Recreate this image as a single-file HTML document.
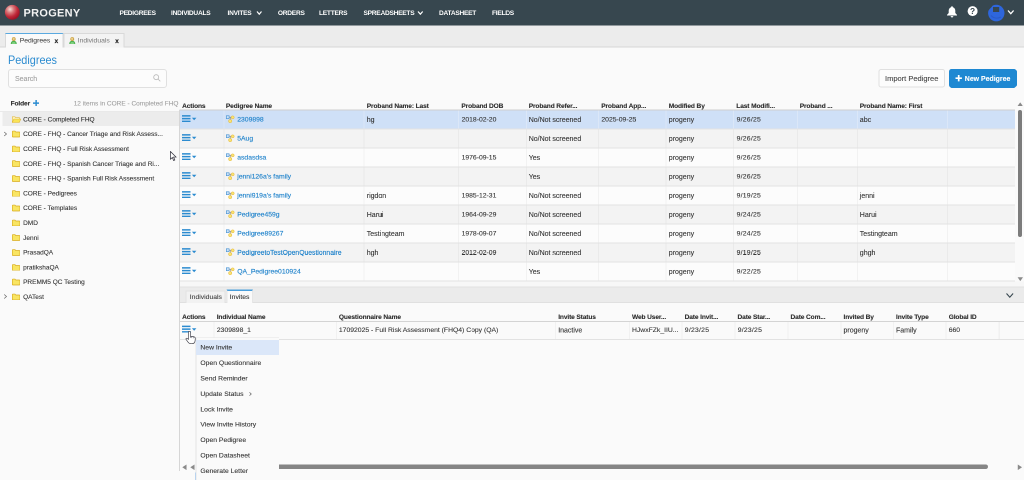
<!DOCTYPE html>
<html><head><meta charset="utf-8"><title>Progeny</title>
<style>
*{box-sizing:border-box;margin:0;padding:0}
html,body{width:1024px;height:480px;overflow:hidden;background:#fafafa;font-family:"Liberation Sans",sans-serif;color:#333}
#app{position:absolute;left:0;top:0;width:2048px;height:960px;transform:scale(0.5);transform-origin:0 0;will-change:transform}
#in{position:absolute;left:0;top:0;width:1024px;height:480px;zoom:2}
.abs{position:absolute}
#hdr{position:absolute;left:0;top:0;width:1024px;height:25.5px;background:#37474f}
#hdr .nav{position:absolute;top:0.25px;height:25px;line-height:25px;color:#fff;font-weight:bold;font-size:6.6px;letter-spacing:-0.25px;white-space:nowrap}
#logo{position:absolute;left:23.3px;top:0.6px;line-height:25px;color:#f4f4f4;font-weight:bold;font-size:10.6px;letter-spacing:0.3px;transform:scaleX(1.035);transform-origin:0 50%}
#tabbar{position:absolute;left:0;top:25.5px;width:1024px;height:22px;background:#ececec;border-bottom:1px solid #d6d6d6}
.ttab{position:absolute;top:7.25px;height:14.75px;background:#f3f3f3;border:1px solid #d9d9d9;border-bottom:none;font-size:6.8px;line-height:13.4px;white-space:nowrap}
.t{position:absolute;white-space:nowrap;font-size:6.8px;line-height:10px;color:#333;-webkit-text-stroke:0.1px}
.a{font-size:7px}
.d{letter-spacing:0.25px}
.b{font-weight:bold;font-size:6.6px;letter-spacing:-0.12px;color:#2c2c2c}
.lnk{color:#2787cd;-webkit-text-stroke:0.16px}
.tr{font-size:6.5px}
#title{position:absolute;left:8px;top:52.1px;font-size:11.7px;line-height:16px;color:#2b8bd0;transform:scaleX(0.93);transform-origin:0 50%}
#search{position:absolute;left:8.1px;top:69px;width:158.9px;height:18.8px;border:1px solid #e0e0e0;border-radius:3px;background:#fcfcfc}
.btn{position:absolute;top:69.2px;height:18.2px;border-radius:2.5px;white-space:nowrap}
.row{position:absolute;left:179.9px;width:835.1px;height:19px;border-bottom:1px solid #e3e3e3}
.cd{position:absolute;top:0;width:1px;height:100%;background:#f2f2f2}
.mi{position:absolute;left:196px;width:83px;height:14.75px}
</style></head><body><div id="app"><div id="in">
<div id="hdr">
<svg class="abs" style="left:4.6px;top:4.6px" width="15.6" height="15.6" viewBox="0 0 16 16"><defs><radialGradient id="g" cx="35%" cy="30%" r="70%"><stop offset="0" stop-color="#f6dcd6"/><stop offset="0.35" stop-color="#d9777a"/><stop offset="0.7" stop-color="#c02a3a"/><stop offset="1" stop-color="#a01226"/></radialGradient></defs><circle cx="8" cy="8" r="7.6" fill="url(#g)"/></svg>
<div id="logo">PROGENY</div>
<div class="nav" style="left:119.5px">PEDIGREES</div>
<div class="nav" style="left:171px">INDIVIDUALS</div>
<div class="nav" style="left:227.5px">INVITES</div>
<div class="nav" style="left:277.9px">ORDERS</div>
<div class="nav" style="left:319px">LETTERS</div>
<div class="nav" style="left:363.5px">SPREADSHEETS</div>
<div class="nav" style="left:439px">DATASHEET</div>
<div class="nav" style="left:492px">FIELDS</div>
<svg class="abs" style="left:256.1px;top:10.3px" width="6.5" height="4.7" viewBox="-1 -1 6.5 4.7"><path d="M0 0 L2.25 2.7 L4.5 0" fill="none" stroke="#fff" stroke-width="1.2"/></svg>
<svg class="abs" style="left:417.1px;top:10.3px" width="6.7" height="4.7" viewBox="-1 -1 6.7 4.7"><path d="M0 0 L2.35 2.7 L4.7 0" fill="none" stroke="#fff" stroke-width="1.2"/></svg>
<svg class="abs" style="left:946.7px;top:5.8px" width="11" height="11.5" viewBox="0 0 11 11.5"><path d="M5.5 0.3c-0.6 0-0.9 0.4-0.9 0.9C3 1.7 2.2 3.1 2.2 4.8v2.2L0.5 8.9v0.6h10V8.9L8.8 7V4.8c0-1.7-0.8-3.1-2.4-3.6c0-0.5-0.3-0.9-0.9-0.9z M4.2 10.1a1.3 1.3 0 0 0 2.6 0z" fill="#fff"/></svg>
<svg class="abs" style="left:967.5px;top:6.1px" width="10.2" height="10.2" viewBox="0 0 10 10"><circle cx="5" cy="5" r="4.9" fill="#fff"/><text x="5" y="7.9" font-size="8.2" font-weight="bold" text-anchor="middle" fill="#37474f" font-family="Liberation Sans, sans-serif">?</text></svg>
<svg class="abs" style="left:987.8px;top:4.5px" width="16.6" height="16.9" viewBox="0 0 16.6 16.9"><ellipse cx="8.3" cy="8.6" rx="8.2" ry="8.3" fill="#2e66dc"/><path d="M0 0H5L3.8 2.3L1.5 4.8L0 6.5z" fill="#37474f"/><path d="M5 2.5h6.2v5h-6.2z" fill="#37474f"/><path d="M3 11c2 2.5 6 3.5 10 1.5" fill="none" stroke="#2a5bc8" stroke-width="1"/></svg>
<svg class="abs" style="left:1007.1px;top:9.4px" width="7.6" height="5.2" viewBox="-1 -1 7.6 5.2"><path d="M0 0 L2.8 3.2 L5.6 0" fill="none" stroke="#fff" stroke-width="1.3"/></svg>
</div>
<div id="tabbar">
<div class="ttab" style="left:5.2px;width:58.2px;background:#fafafa;border-top:1px solid #5aa9e0"><svg class="abs" style="left:4.4px;top:3px" width="6.5" height="7.25" viewBox="0 0 7 8"><path d="M0.2 8c0-2.7 1.2-3.7 3.3-3.7s3.3 1 3.3 3.7z" fill="#4cb050"/><path d="M1.3 8c0-1.8 0.8-2.6 2.2-2.6s2.2 0.8 2.2 2.6z" fill="#7fd07f"/><circle cx="3.5" cy="2.3" r="2.1" fill="#c9a040"/><circle cx="3.4" cy="2.1" r="1.3" fill="#ecd08a"/></svg><span class="abs" style="left:13.5px;color:#333">Pedigrees</span><span class="abs" style="left:48.4px;top:0.5px;font-weight:bold;font-size:6.3px;color:#2a2a2a;-webkit-text-stroke:0.25px">x</span></div>
<div class="ttab" style="left:63.4px;width:61.2px;color:#777"><svg class="abs" style="left:4.4px;top:3px" width="6.5" height="7.25" viewBox="0 0 7 8"><path d="M0.2 8c0-2.7 1.2-3.7 3.3-3.7s3.3 1 3.3 3.7z" fill="#4cb050"/><path d="M1.3 8c0-1.8 0.8-2.6 2.2-2.6s2.2 0.8 2.2 2.6z" fill="#7fd07f"/><circle cx="3.5" cy="2.3" r="2.1" fill="#c9a040"/><circle cx="3.4" cy="2.1" r="1.3" fill="#ecd08a"/></svg><span class="abs" style="left:13.3px">Individuals</span><span class="abs" style="left:50.8px;top:0.5px;font-weight:bold;font-size:6.3px;color:#2a2a2a;-webkit-text-stroke:0.25px">x</span></div>
</div>
<div id="title">Pedigrees</div>
<div id="search"><span class="t" style="left:5.9px;top:3.6px;color:#a0a0a0;font-size:7px">Search</span><svg class="abs" style="left:144px;top:4px" width="8" height="8" viewBox="0 0 8 8"><circle cx="3.2" cy="3.2" r="2.5" fill="none" stroke="#bababa" stroke-width="0.8"/><path d="M5 5L7.3 7.3" stroke="#bababa" stroke-width="0.8"/></svg></div>
<div class="btn" style="left:878.5px;width:66.3px;background:#fcfcfc;border:1px solid #e0e0e0"><span class="t" style="left:5.5px;top:3.4px;font-size:7.5px;color:#444">Import Pedigree</span></div>
<div class="btn" style="left:948.8px;width:67.8px;background:#1e88d2"><svg class="abs" style="left:6.7px;top:5.9px" width="6.4" height="6.4" viewBox="0 0 6.4 6.4"><path d="M3.2 0V6.4M0 3.2H6.4" stroke="#fff" stroke-width="1.7"/></svg><span class="t" style="left:16px;top:4.4px;font-size:6.95px;font-weight:bold;color:#fff">New Pedigree</span></div>
<div class="t b" style="left:10.6px;top:98.6px">Folder</div>
<svg class="abs" style="left:32.75px;top:99.75px" width="6.25" height="6.25" viewBox="0 0 6 6"><path d="M3 0V6M0 3H6" stroke="#2b8bd0" stroke-width="1.4"/></svg>
<div class="t tr" style="left:73.7px;top:98.7px;color:#a0a0a0">12 items in CORE - Completed FHQ</div>
<div class="abs" style="left:0;top:111px;width:179.5px;height:1px;background:#e9e9e9"></div>
<div class="abs" style="left:2.3px;top:112px;width:177.2px;height:14px;background:#ececec"></div>
<svg class="abs" style="left:12px;top:115.85px" width="9" height="7" viewBox="0 0 9 7"><path d="M0.3 6.5V0.8h2.7l0.8 0.9h3.7v1.3" fill="#fff6c8" stroke="#e2b93b" stroke-width="0.6"/><path d="M0.3 6.5L1.8 3h7L7.3 6.5z" fill="#f9e356" stroke="#e2b93b" stroke-width="0.6"/></svg>
<div class="t tr" style="left:23.1px;top:114.45px">CORE - Completed FHQ</div>
<svg class="abs" style="left:12px;top:130.64px" width="8.2" height="6.8" viewBox="0 0 8.2 6.8"><path d="M0.3 6V1.2q0-0.6 0.6-0.6h2.1l0.8 0.9h3.5q0.6 0 0.6 0.6V6q0 0.5-0.6 0.5H0.9q-0.6 0-0.6-0.5z" fill="#f9e562" stroke="#d8ac22" stroke-width="0.65"/></svg>
<div class="t tr" style="left:23.1px;top:129.24px">CORE - FHQ - Cancer Triage and Risk Assess...</div>
<svg class="abs" style="left:3.6px;top:131.44px" width="4" height="5" viewBox="0 0 4 5"><path d="M0.7 0.5L3 2.5L0.7 4.5" fill="none" stroke="#666" stroke-width="0.7"/></svg>
<svg class="abs" style="left:12px;top:145.43px" width="8.2" height="6.8" viewBox="0 0 8.2 6.8"><path d="M0.3 6V1.2q0-0.6 0.6-0.6h2.1l0.8 0.9h3.5q0.6 0 0.6 0.6V6q0 0.5-0.6 0.5H0.9q-0.6 0-0.6-0.5z" fill="#f9e562" stroke="#d8ac22" stroke-width="0.65"/></svg>
<div class="t tr" style="left:23.1px;top:144.03px">CORE - FHQ - Full Risk Assessment</div>
<svg class="abs" style="left:12px;top:160.22px" width="8.2" height="6.8" viewBox="0 0 8.2 6.8"><path d="M0.3 6V1.2q0-0.6 0.6-0.6h2.1l0.8 0.9h3.5q0.6 0 0.6 0.6V6q0 0.5-0.6 0.5H0.9q-0.6 0-0.6-0.5z" fill="#f9e562" stroke="#d8ac22" stroke-width="0.65"/></svg>
<div class="t tr" style="left:23.1px;top:158.82px">CORE - FHQ - Spanish Cancer Triage and Ri...</div>
<svg class="abs" style="left:12px;top:175.01px" width="8.2" height="6.8" viewBox="0 0 8.2 6.8"><path d="M0.3 6V1.2q0-0.6 0.6-0.6h2.1l0.8 0.9h3.5q0.6 0 0.6 0.6V6q0 0.5-0.6 0.5H0.9q-0.6 0-0.6-0.5z" fill="#f9e562" stroke="#d8ac22" stroke-width="0.65"/></svg>
<div class="t tr" style="left:23.1px;top:173.61px">CORE - FHQ - Spanish Full Risk Assessment</div>
<svg class="abs" style="left:12px;top:189.8px" width="8.2" height="6.8" viewBox="0 0 8.2 6.8"><path d="M0.3 6V1.2q0-0.6 0.6-0.6h2.1l0.8 0.9h3.5q0.6 0 0.6 0.6V6q0 0.5-0.6 0.5H0.9q-0.6 0-0.6-0.5z" fill="#f9e562" stroke="#d8ac22" stroke-width="0.65"/></svg>
<div class="t tr" style="left:23.1px;top:188.4px">CORE - Pedigrees</div>
<svg class="abs" style="left:12px;top:204.59px" width="8.2" height="6.8" viewBox="0 0 8.2 6.8"><path d="M0.3 6V1.2q0-0.6 0.6-0.6h2.1l0.8 0.9h3.5q0.6 0 0.6 0.6V6q0 0.5-0.6 0.5H0.9q-0.6 0-0.6-0.5z" fill="#f9e562" stroke="#d8ac22" stroke-width="0.65"/></svg>
<div class="t tr" style="left:23.1px;top:203.19px">CORE - Templates</div>
<svg class="abs" style="left:12px;top:219.38px" width="8.2" height="6.8" viewBox="0 0 8.2 6.8"><path d="M0.3 6V1.2q0-0.6 0.6-0.6h2.1l0.8 0.9h3.5q0.6 0 0.6 0.6V6q0 0.5-0.6 0.5H0.9q-0.6 0-0.6-0.5z" fill="#f9e562" stroke="#d8ac22" stroke-width="0.65"/></svg>
<div class="t tr" style="left:23.1px;top:217.98px">DMD</div>
<svg class="abs" style="left:12px;top:234.17px" width="8.2" height="6.8" viewBox="0 0 8.2 6.8"><path d="M0.3 6V1.2q0-0.6 0.6-0.6h2.1l0.8 0.9h3.5q0.6 0 0.6 0.6V6q0 0.5-0.6 0.5H0.9q-0.6 0-0.6-0.5z" fill="#f9e562" stroke="#d8ac22" stroke-width="0.65"/></svg>
<div class="t tr" style="left:23.1px;top:232.77px">Jenni</div>
<svg class="abs" style="left:12px;top:248.96px" width="8.2" height="6.8" viewBox="0 0 8.2 6.8"><path d="M0.3 6V1.2q0-0.6 0.6-0.6h2.1l0.8 0.9h3.5q0.6 0 0.6 0.6V6q0 0.5-0.6 0.5H0.9q-0.6 0-0.6-0.5z" fill="#f9e562" stroke="#d8ac22" stroke-width="0.65"/></svg>
<div class="t tr" style="left:23.1px;top:247.56px">PrasadQA</div>
<svg class="abs" style="left:12px;top:263.75px" width="8.2" height="6.8" viewBox="0 0 8.2 6.8"><path d="M0.3 6V1.2q0-0.6 0.6-0.6h2.1l0.8 0.9h3.5q0.6 0 0.6 0.6V6q0 0.5-0.6 0.5H0.9q-0.6 0-0.6-0.5z" fill="#f9e562" stroke="#d8ac22" stroke-width="0.65"/></svg>
<div class="t tr" style="left:23.1px;top:262.35px">pratikshaQA</div>
<svg class="abs" style="left:12px;top:278.54px" width="8.2" height="6.8" viewBox="0 0 8.2 6.8"><path d="M0.3 6V1.2q0-0.6 0.6-0.6h2.1l0.8 0.9h3.5q0.6 0 0.6 0.6V6q0 0.5-0.6 0.5H0.9q-0.6 0-0.6-0.5z" fill="#f9e562" stroke="#d8ac22" stroke-width="0.65"/></svg>
<div class="t tr" style="left:23.1px;top:277.14px">PREMM5 QC Testing</div>
<svg class="abs" style="left:12px;top:293.33px" width="8.2" height="6.8" viewBox="0 0 8.2 6.8"><path d="M0.3 6V1.2q0-0.6 0.6-0.6h2.1l0.8 0.9h3.5q0.6 0 0.6 0.6V6q0 0.5-0.6 0.5H0.9q-0.6 0-0.6-0.5z" fill="#f9e562" stroke="#d8ac22" stroke-width="0.65"/></svg>
<div class="t tr" style="left:23.1px;top:291.93px">QATest</div>
<svg class="abs" style="left:3.6px;top:294.13px" width="4" height="5" viewBox="0 0 4 5"><path d="M0.7 0.5L3 2.5L0.7 4.5" fill="none" stroke="#666" stroke-width="0.7"/></svg>
<div class="abs" style="left:179.5px;top:95px;width:844.5px;height:191px;background:#fafafa"></div>
<div class="t b" style="left:182.1px;top:100.9px">Actions</div>
<div class="t b" style="left:225.9px;top:100.9px">Pedigree Name</div>
<div class="t b" style="left:366.75px;top:100.9px">Proband Name: Last</div>
<div class="t b" style="left:461.4px;top:100.9px">Proband DOB</div>
<div class="t b" style="left:528.7px;top:100.9px">Proband Refer...</div>
<div class="t b" style="left:601.2px;top:100.9px">Proband App...</div>
<div class="t b" style="left:668.7px;top:100.9px">Modified By</div>
<div class="t b" style="left:736.3px;top:100.9px">Last Modifi...</div>
<div class="t b" style="left:799.7px;top:100.9px">Proband ...</div>
<div class="t b" style="left:859.7px;top:100.9px">Proband Name: First</div>
<div class="abs" style="left:179.5px;top:109.6px;width:835.5px;height:1px;background:#cfcfcf"></div>
<div class="row" style="top:110.5px;background:#cfe0f7">
<div class="cd" style="left:43.5px;background:#dbe7f8"></div>
<div class="cd" style="left:183.6px;background:#dbe7f8"></div>
<div class="cd" style="left:277.9px;background:#dbe7f8"></div>
<div class="cd" style="left:346px;background:#dbe7f8"></div>
<div class="cd" style="left:417.9px;background:#dbe7f8"></div>
<div class="cd" style="left:485.6px;background:#dbe7f8"></div>
<div class="cd" style="left:553.1px;background:#dbe7f8"></div>
<div class="cd" style="left:616.9px;background:#dbe7f8"></div>
<div class="cd" style="left:677.1px;background:#dbe7f8"></div>
<div class="cd" style="left:767.1px;background:#dbe7f8"></div>
<svg class="abs" style="left:2.2px;top:4.55px" width="15" height="7.2" viewBox="0 0 15 7.2"><path d="M0 0.85h8.5M0 3.6h8.5M0 6.35h8.5" stroke="#2b8bd0" stroke-width="1.55"/><path d="M9.9 2.75h4.5l-2.25 2.5z" fill="#2b8bd0"/></svg>
<svg class="abs" style="left:46px;top:5px" width="8.5" height="7.5" viewBox="0 0 8.5 7.5"><path d="M2 1.7h4.5M4.3 1.7v3.5" stroke="#888" stroke-width="0.6" fill="none"/><rect x="0.3" y="0.3" width="2.8" height="2.8" fill="#cfe3f7" stroke="#3b8bd0" stroke-width="0.6"/><circle cx="6.7" cy="1.85" r="1.5" fill="#fae374" stroke="#e4b631" stroke-width="0.5"/><circle cx="4.2" cy="5.6" r="1.65" fill="#fae374" stroke="#e4b631" stroke-width="0.5"/></svg>
<div class="t lnk" style="left:57.35px;top:4px">2309898</div>
<div class="t a" style="left:186.85px;top:4px">hg</div>
<div class="t " style="left:281.7px;top:4px">2018-02-20</div>
<div class="t a" style="left:348.8px;top:4px">No/Not screened</div>
<div class="t " style="left:421.5px;top:4px">2025-09-25</div>
<div class="t a" style="left:488.9px;top:4px">progeny</div>
<div class="t d" style="left:556.7px;top:4px">9/26/25</div>
<div class="t a" style="left:679.9px;top:4px">abc</div>
</div>
<div class="row" style="top:129.5px;background:#f3f3f3">
<div class="cd" style="left:43.5px;background:#eaeaea"></div>
<div class="cd" style="left:183.6px;background:#eaeaea"></div>
<div class="cd" style="left:277.9px;background:#eaeaea"></div>
<div class="cd" style="left:346px;background:#eaeaea"></div>
<div class="cd" style="left:417.9px;background:#eaeaea"></div>
<div class="cd" style="left:485.6px;background:#eaeaea"></div>
<div class="cd" style="left:553.1px;background:#eaeaea"></div>
<div class="cd" style="left:616.9px;background:#eaeaea"></div>
<div class="cd" style="left:677.1px;background:#eaeaea"></div>
<div class="cd" style="left:767.1px;background:#eaeaea"></div>
<svg class="abs" style="left:2.2px;top:4.55px" width="15" height="7.2" viewBox="0 0 15 7.2"><path d="M0 0.85h8.5M0 3.6h8.5M0 6.35h8.5" stroke="#2b8bd0" stroke-width="1.55"/><path d="M9.9 2.75h4.5l-2.25 2.5z" fill="#2b8bd0"/></svg>
<svg class="abs" style="left:46px;top:5px" width="8.5" height="7.5" viewBox="0 0 8.5 7.5"><path d="M2 1.7h4.5M4.3 1.7v3.5" stroke="#888" stroke-width="0.6" fill="none"/><rect x="0.3" y="0.3" width="2.8" height="2.8" fill="#cfe3f7" stroke="#3b8bd0" stroke-width="0.6"/><circle cx="6.7" cy="1.85" r="1.5" fill="#fae374" stroke="#e4b631" stroke-width="0.5"/><circle cx="4.2" cy="5.6" r="1.65" fill="#fae374" stroke="#e4b631" stroke-width="0.5"/></svg>
<div class="t lnk" style="left:57.35px;top:4px">5Aug</div>
<div class="t a" style="left:348.8px;top:4px">No/Not screened</div>
<div class="t a" style="left:488.9px;top:4px">progeny</div>
<div class="t d" style="left:556.7px;top:4px">9/26/25</div>
</div>
<div class="row" style="top:148.5px;background:#fcfcfc">
<div class="cd" style="left:43.5px;"></div>
<div class="cd" style="left:183.6px;"></div>
<div class="cd" style="left:277.9px;"></div>
<div class="cd" style="left:346px;"></div>
<div class="cd" style="left:417.9px;"></div>
<div class="cd" style="left:485.6px;"></div>
<div class="cd" style="left:553.1px;"></div>
<div class="cd" style="left:616.9px;"></div>
<div class="cd" style="left:677.1px;"></div>
<div class="cd" style="left:767.1px;"></div>
<svg class="abs" style="left:2.2px;top:4.55px" width="15" height="7.2" viewBox="0 0 15 7.2"><path d="M0 0.85h8.5M0 3.6h8.5M0 6.35h8.5" stroke="#2b8bd0" stroke-width="1.55"/><path d="M9.9 2.75h4.5l-2.25 2.5z" fill="#2b8bd0"/></svg>
<svg class="abs" style="left:46px;top:5px" width="8.5" height="7.5" viewBox="0 0 8.5 7.5"><path d="M2 1.7h4.5M4.3 1.7v3.5" stroke="#888" stroke-width="0.6" fill="none"/><rect x="0.3" y="0.3" width="2.8" height="2.8" fill="#cfe3f7" stroke="#3b8bd0" stroke-width="0.6"/><circle cx="6.7" cy="1.85" r="1.5" fill="#fae374" stroke="#e4b631" stroke-width="0.5"/><circle cx="4.2" cy="5.6" r="1.65" fill="#fae374" stroke="#e4b631" stroke-width="0.5"/></svg>
<div class="t lnk" style="left:57.35px;top:4px">asdasdsa</div>
<div class="t " style="left:281.7px;top:4px">1976-09-15</div>
<div class="t a" style="left:348.8px;top:4px">Yes</div>
<div class="t a" style="left:488.9px;top:4px">progeny</div>
<div class="t d" style="left:556.7px;top:4px">9/26/25</div>
</div>
<div class="row" style="top:167.5px;background:#f3f3f3">
<div class="cd" style="left:43.5px;background:#eaeaea"></div>
<div class="cd" style="left:183.6px;background:#eaeaea"></div>
<div class="cd" style="left:277.9px;background:#eaeaea"></div>
<div class="cd" style="left:346px;background:#eaeaea"></div>
<div class="cd" style="left:417.9px;background:#eaeaea"></div>
<div class="cd" style="left:485.6px;background:#eaeaea"></div>
<div class="cd" style="left:553.1px;background:#eaeaea"></div>
<div class="cd" style="left:616.9px;background:#eaeaea"></div>
<div class="cd" style="left:677.1px;background:#eaeaea"></div>
<div class="cd" style="left:767.1px;background:#eaeaea"></div>
<svg class="abs" style="left:2.2px;top:4.55px" width="15" height="7.2" viewBox="0 0 15 7.2"><path d="M0 0.85h8.5M0 3.6h8.5M0 6.35h8.5" stroke="#2b8bd0" stroke-width="1.55"/><path d="M9.9 2.75h4.5l-2.25 2.5z" fill="#2b8bd0"/></svg>
<svg class="abs" style="left:46px;top:5px" width="8.5" height="7.5" viewBox="0 0 8.5 7.5"><path d="M2 1.7h4.5M4.3 1.7v3.5" stroke="#888" stroke-width="0.6" fill="none"/><rect x="0.3" y="0.3" width="2.8" height="2.8" fill="#cfe3f7" stroke="#3b8bd0" stroke-width="0.6"/><circle cx="6.7" cy="1.85" r="1.5" fill="#fae374" stroke="#e4b631" stroke-width="0.5"/><circle cx="4.2" cy="5.6" r="1.65" fill="#fae374" stroke="#e4b631" stroke-width="0.5"/></svg>
<div class="t lnk" style="left:57.35px;top:4px">jenni126a's family</div>
<div class="t a" style="left:348.8px;top:4px">Yes</div>
<div class="t a" style="left:488.9px;top:4px">progeny</div>
<div class="t d" style="left:556.7px;top:4px">9/26/25</div>
</div>
<div class="row" style="top:186.5px;background:#fcfcfc">
<div class="cd" style="left:43.5px;"></div>
<div class="cd" style="left:183.6px;"></div>
<div class="cd" style="left:277.9px;"></div>
<div class="cd" style="left:346px;"></div>
<div class="cd" style="left:417.9px;"></div>
<div class="cd" style="left:485.6px;"></div>
<div class="cd" style="left:553.1px;"></div>
<div class="cd" style="left:616.9px;"></div>
<div class="cd" style="left:677.1px;"></div>
<div class="cd" style="left:767.1px;"></div>
<svg class="abs" style="left:2.2px;top:4.55px" width="15" height="7.2" viewBox="0 0 15 7.2"><path d="M0 0.85h8.5M0 3.6h8.5M0 6.35h8.5" stroke="#2b8bd0" stroke-width="1.55"/><path d="M9.9 2.75h4.5l-2.25 2.5z" fill="#2b8bd0"/></svg>
<svg class="abs" style="left:46px;top:5px" width="8.5" height="7.5" viewBox="0 0 8.5 7.5"><path d="M2 1.7h4.5M4.3 1.7v3.5" stroke="#888" stroke-width="0.6" fill="none"/><rect x="0.3" y="0.3" width="2.8" height="2.8" fill="#cfe3f7" stroke="#3b8bd0" stroke-width="0.6"/><circle cx="6.7" cy="1.85" r="1.5" fill="#fae374" stroke="#e4b631" stroke-width="0.5"/><circle cx="4.2" cy="5.6" r="1.65" fill="#fae374" stroke="#e4b631" stroke-width="0.5"/></svg>
<div class="t lnk" style="left:57.35px;top:4px">jenni919a's family</div>
<div class="t a" style="left:186.85px;top:4px">rigdon</div>
<div class="t " style="left:281.7px;top:4px">1985-12-31</div>
<div class="t a" style="left:348.8px;top:4px">No/Not screened</div>
<div class="t a" style="left:488.9px;top:4px">progeny</div>
<div class="t d" style="left:556.7px;top:4px">9/19/25</div>
<div class="t a" style="left:679.9px;top:4px">jenni</div>
</div>
<div class="row" style="top:205.5px;background:#f3f3f3">
<div class="cd" style="left:43.5px;background:#eaeaea"></div>
<div class="cd" style="left:183.6px;background:#eaeaea"></div>
<div class="cd" style="left:277.9px;background:#eaeaea"></div>
<div class="cd" style="left:346px;background:#eaeaea"></div>
<div class="cd" style="left:417.9px;background:#eaeaea"></div>
<div class="cd" style="left:485.6px;background:#eaeaea"></div>
<div class="cd" style="left:553.1px;background:#eaeaea"></div>
<div class="cd" style="left:616.9px;background:#eaeaea"></div>
<div class="cd" style="left:677.1px;background:#eaeaea"></div>
<div class="cd" style="left:767.1px;background:#eaeaea"></div>
<svg class="abs" style="left:2.2px;top:4.55px" width="15" height="7.2" viewBox="0 0 15 7.2"><path d="M0 0.85h8.5M0 3.6h8.5M0 6.35h8.5" stroke="#2b8bd0" stroke-width="1.55"/><path d="M9.9 2.75h4.5l-2.25 2.5z" fill="#2b8bd0"/></svg>
<svg class="abs" style="left:46px;top:5px" width="8.5" height="7.5" viewBox="0 0 8.5 7.5"><path d="M2 1.7h4.5M4.3 1.7v3.5" stroke="#888" stroke-width="0.6" fill="none"/><rect x="0.3" y="0.3" width="2.8" height="2.8" fill="#cfe3f7" stroke="#3b8bd0" stroke-width="0.6"/><circle cx="6.7" cy="1.85" r="1.5" fill="#fae374" stroke="#e4b631" stroke-width="0.5"/><circle cx="4.2" cy="5.6" r="1.65" fill="#fae374" stroke="#e4b631" stroke-width="0.5"/></svg>
<div class="t lnk" style="left:57.35px;top:4px">Pedigree459g</div>
<div class="t a" style="left:186.85px;top:4px">Harui</div>
<div class="t " style="left:281.7px;top:4px">1964-09-29</div>
<div class="t a" style="left:348.8px;top:4px">No/Not screened</div>
<div class="t a" style="left:488.9px;top:4px">progeny</div>
<div class="t d" style="left:556.7px;top:4px">9/24/25</div>
<div class="t a" style="left:679.9px;top:4px">Harui</div>
</div>
<div class="row" style="top:224.5px;background:#fcfcfc">
<div class="cd" style="left:43.5px;"></div>
<div class="cd" style="left:183.6px;"></div>
<div class="cd" style="left:277.9px;"></div>
<div class="cd" style="left:346px;"></div>
<div class="cd" style="left:417.9px;"></div>
<div class="cd" style="left:485.6px;"></div>
<div class="cd" style="left:553.1px;"></div>
<div class="cd" style="left:616.9px;"></div>
<div class="cd" style="left:677.1px;"></div>
<div class="cd" style="left:767.1px;"></div>
<svg class="abs" style="left:2.2px;top:4.55px" width="15" height="7.2" viewBox="0 0 15 7.2"><path d="M0 0.85h8.5M0 3.6h8.5M0 6.35h8.5" stroke="#2b8bd0" stroke-width="1.55"/><path d="M9.9 2.75h4.5l-2.25 2.5z" fill="#2b8bd0"/></svg>
<svg class="abs" style="left:46px;top:5px" width="8.5" height="7.5" viewBox="0 0 8.5 7.5"><path d="M2 1.7h4.5M4.3 1.7v3.5" stroke="#888" stroke-width="0.6" fill="none"/><rect x="0.3" y="0.3" width="2.8" height="2.8" fill="#cfe3f7" stroke="#3b8bd0" stroke-width="0.6"/><circle cx="6.7" cy="1.85" r="1.5" fill="#fae374" stroke="#e4b631" stroke-width="0.5"/><circle cx="4.2" cy="5.6" r="1.65" fill="#fae374" stroke="#e4b631" stroke-width="0.5"/></svg>
<div class="t lnk" style="left:57.35px;top:4px">Pedigree89267</div>
<div class="t a" style="left:186.85px;top:4px">Testingteam</div>
<div class="t " style="left:281.7px;top:4px">1978-09-07</div>
<div class="t a" style="left:348.8px;top:4px">No/Not screened</div>
<div class="t a" style="left:488.9px;top:4px">progeny</div>
<div class="t d" style="left:556.7px;top:4px">9/24/25</div>
<div class="t a" style="left:679.9px;top:4px">Testingteam</div>
</div>
<div class="row" style="top:243.5px;background:#f3f3f3">
<div class="cd" style="left:43.5px;background:#eaeaea"></div>
<div class="cd" style="left:183.6px;background:#eaeaea"></div>
<div class="cd" style="left:277.9px;background:#eaeaea"></div>
<div class="cd" style="left:346px;background:#eaeaea"></div>
<div class="cd" style="left:417.9px;background:#eaeaea"></div>
<div class="cd" style="left:485.6px;background:#eaeaea"></div>
<div class="cd" style="left:553.1px;background:#eaeaea"></div>
<div class="cd" style="left:616.9px;background:#eaeaea"></div>
<div class="cd" style="left:677.1px;background:#eaeaea"></div>
<div class="cd" style="left:767.1px;background:#eaeaea"></div>
<svg class="abs" style="left:2.2px;top:4.55px" width="15" height="7.2" viewBox="0 0 15 7.2"><path d="M0 0.85h8.5M0 3.6h8.5M0 6.35h8.5" stroke="#2b8bd0" stroke-width="1.55"/><path d="M9.9 2.75h4.5l-2.25 2.5z" fill="#2b8bd0"/></svg>
<svg class="abs" style="left:46px;top:5px" width="8.5" height="7.5" viewBox="0 0 8.5 7.5"><path d="M2 1.7h4.5M4.3 1.7v3.5" stroke="#888" stroke-width="0.6" fill="none"/><rect x="0.3" y="0.3" width="2.8" height="2.8" fill="#cfe3f7" stroke="#3b8bd0" stroke-width="0.6"/><circle cx="6.7" cy="1.85" r="1.5" fill="#fae374" stroke="#e4b631" stroke-width="0.5"/><circle cx="4.2" cy="5.6" r="1.65" fill="#fae374" stroke="#e4b631" stroke-width="0.5"/></svg>
<div class="t lnk" style="left:57.35px;top:4px">PedigreetoTestOpenQuestionnaire</div>
<div class="t a" style="left:186.85px;top:4px">hgh</div>
<div class="t " style="left:281.7px;top:4px">2012-02-09</div>
<div class="t a" style="left:348.8px;top:4px">No/Not screened</div>
<div class="t a" style="left:488.9px;top:4px">progeny</div>
<div class="t d" style="left:556.7px;top:4px">9/19/25</div>
<div class="t a" style="left:679.9px;top:4px">ghgh</div>
</div>
<div class="row" style="top:262.5px;background:#fcfcfc">
<div class="cd" style="left:43.5px;"></div>
<div class="cd" style="left:183.6px;"></div>
<div class="cd" style="left:277.9px;"></div>
<div class="cd" style="left:346px;"></div>
<div class="cd" style="left:417.9px;"></div>
<div class="cd" style="left:485.6px;"></div>
<div class="cd" style="left:553.1px;"></div>
<div class="cd" style="left:616.9px;"></div>
<div class="cd" style="left:677.1px;"></div>
<div class="cd" style="left:767.1px;"></div>
<svg class="abs" style="left:2.2px;top:4.55px" width="15" height="7.2" viewBox="0 0 15 7.2"><path d="M0 0.85h8.5M0 3.6h8.5M0 6.35h8.5" stroke="#2b8bd0" stroke-width="1.55"/><path d="M9.9 2.75h4.5l-2.25 2.5z" fill="#2b8bd0"/></svg>
<svg class="abs" style="left:46px;top:5px" width="8.5" height="7.5" viewBox="0 0 8.5 7.5"><path d="M2 1.7h4.5M4.3 1.7v3.5" stroke="#888" stroke-width="0.6" fill="none"/><rect x="0.3" y="0.3" width="2.8" height="2.8" fill="#cfe3f7" stroke="#3b8bd0" stroke-width="0.6"/><circle cx="6.7" cy="1.85" r="1.5" fill="#fae374" stroke="#e4b631" stroke-width="0.5"/><circle cx="4.2" cy="5.6" r="1.65" fill="#fae374" stroke="#e4b631" stroke-width="0.5"/></svg>
<div class="t lnk" style="left:57.35px;top:4px">QA_Pedigree010924</div>
<div class="t a" style="left:348.8px;top:4px">Yes</div>
<div class="t a" style="left:488.9px;top:4px">progeny</div>
<div class="t d" style="left:556.7px;top:4px">9/22/25</div>
</div>
<svg class="abs" style="left:1017.25px;top:102px" width="5.4" height="4.2" viewBox="0 0 5 4"><path d="M0 3.8L2.5 0.3L5 3.8z" fill="#8a8a8a"/></svg>
<svg class="abs" style="left:1017.25px;top:277.2px" width="5.6" height="4.3" viewBox="0 0 5 4"><path d="M0 0.2L2.5 3.8L5 0.2z" fill="#8a8a8a"/></svg>
<div class="abs" style="left:1018px;top:110px;width:4px;height:126.8px;background:#7c7c7c;border-radius:2px"></div>
<div class="abs" style="left:179.5px;top:281.25px;width:844.5px;height:5.2px;background:#f7f7f7"></div>
<div class="abs" style="left:179.5px;top:286.3px;width:844.5px;height:16.8px;background:#ebebeb;border-top:1px solid #e2e2e2;border-bottom:1px solid #e0e0e0"></div>
<div class="abs" style="left:185.6px;top:290.5px;width:40px;height:12.3px;background:#f2f2f2;border:1px solid #e3e3e3;border-bottom:none"></div>
<div class="abs" style="left:226.4px;top:289.4px;width:26.8px;height:13.6px;background:#fafafa;border:1px solid #e6e6e6;border-top:1.8px solid #4a9fdc;border-bottom:none"></div>
<div class="t" style="left:189.8px;top:292.1px;color:#444">Individuals</div>
<div class="t" style="left:229.8px;top:292.1px">Invites</div>
<svg class="abs" style="left:1005.6px;top:292.3px" width="8.6" height="5.7" viewBox="-1 -1 8.6 5.7"><path d="M0 0 L3.3 3.7 L6.6 0" fill="none" stroke="#37474f" stroke-width="1.1"/></svg>
<div class="t b" style="left:182.1px;top:312px">Actions</div>
<div class="t b" style="left:216.7px;top:312px">Individual Name</div>
<div class="t b" style="left:338.9px;top:312px">Questionnaire Name</div>
<div class="t b" style="left:558.2px;top:312px">Invite Status</div>
<div class="t b" style="left:632px;top:312px">Web User...</div>
<div class="t b" style="left:684.6px;top:312px">Date Invit...</div>
<div class="t b" style="left:737.5px;top:312px">Date Star...</div>
<div class="t b" style="left:790.5px;top:312px">Date Com...</div>
<div class="t b" style="left:843.5px;top:312px">Invited By</div>
<div class="t b" style="left:896px;top:312px">Invite Type</div>
<div class="t b" style="left:948.7px;top:312px">Global ID</div>
<div class="abs" style="left:179.5px;top:320.8px;width:844.5px;height:1px;background:#d4d4d4"></div>
<div class="abs" style="left:179.5px;top:338.9px;width:844.5px;height:1px;background:#e2e2e2"></div>
<svg class="abs" style="left:182.1px;top:325.4px" width="15" height="7.2" viewBox="0 0 15 7.2"><path d="M0 0.85h8.5M0 3.6h8.5M0 6.35h8.5" stroke="#2b8bd0" stroke-width="1.55"/><path d="M9.9 2.75h4.5l-2.25 2.5z" fill="#2b8bd0"/></svg>
<div class="t " style="left:216.9px;top:324.85px">2309898_1</div>
<div class="t " style="left:338.9px;top:324.85px">17092025 - Full Risk Assessment (FHQ4) Copy (QA)</div>
<div class="t a" style="left:558.2px;top:324.85px">Inactive</div>
<div class="t " style="left:632px;top:324.85px">HJwxFZk_IIU...</div>
<div class="t d" style="left:684.8px;top:324.85px">9/23/25</div>
<div class="t d" style="left:737.7px;top:324.85px">9/23/25</div>
<div class="t a" style="left:843.5px;top:324.85px">progeny</div>
<div class="t a" style="left:896px;top:324.85px">Family</div>
<div class="t " style="left:948.7px;top:324.85px">660</div>
<div class="abs" style="left:213.5px;top:322px;width:1px;height:17px;background:#f1f1f1"></div>
<div class="abs" style="left:335.8px;top:322px;width:1px;height:17px;background:#f1f1f1"></div>
<div class="abs" style="left:555px;top:322px;width:1px;height:17px;background:#f1f1f1"></div>
<div class="abs" style="left:629px;top:322px;width:1px;height:17px;background:#f1f1f1"></div>
<div class="abs" style="left:681.5px;top:322px;width:1px;height:17px;background:#f1f1f1"></div>
<div class="abs" style="left:734.3px;top:322px;width:1px;height:17px;background:#f1f1f1"></div>
<div class="abs" style="left:787.3px;top:322px;width:1px;height:17px;background:#f1f1f1"></div>
<div class="abs" style="left:840.3px;top:322px;width:1px;height:17px;background:#f1f1f1"></div>
<div class="abs" style="left:893px;top:322px;width:1px;height:17px;background:#f1f1f1"></div>
<div class="abs" style="left:945.5px;top:322px;width:1px;height:17px;background:#f1f1f1"></div>
<div class="abs" style="left:998.5px;top:322px;width:1px;height:17px;background:#f1f1f1"></div>
<div class="abs" style="left:279px;top:464.3px;width:708.8px;height:4.8px;background:#858585;border-radius:0 2.4px 2.4px 0"></div>
<svg class="abs" style="left:182.1px;top:464.4px" width="4.8" height="5.6" viewBox="0 0 4 5"><path d="M3.9 0L0.1 2.5L3.9 5z" fill="#8a8a8a"/></svg>
<svg class="abs" style="left:190px;top:464.4px" width="4.8" height="5.6" viewBox="0 0 4 5"><path d="M3.9 0L0.1 2.5L3.9 5z" fill="#8a8a8a"/></svg>
<svg class="abs" style="left:1017.5px;top:464.4px" width="4.8" height="5.6" viewBox="0 0 4 5"><path d="M0.1 0L3.9 2.5L0.1 5z" fill="#8a8a8a"/></svg>
<div class="abs" style="left:179px;top:110px;width:1px;height:361px;background:#d6d6d6"></div>
<div class="abs" style="left:195.5px;top:337.5px;width:83.5px;height:143px;background:#fafafa;border-left:1px solid #e4e4e4;border-top:0.5px solid #e4e4e4"></div>
<div class="mi" style="top:340px;background:#dbe7f9"></div>
<div class="t" style="left:200.4px;top:342.7px">New Invite</div>
<div class="t" style="left:200.4px;top:358.09px">Open Questionnaire</div>
<div class="t" style="left:200.4px;top:373.48px">Send Reminder</div>
<div class="t" style="left:200.4px;top:388.87px">Update Status</div>
<svg class="abs" style="left:249px;top:391.87px" width="3" height="4" viewBox="0 0 3 4"><path d="M0.5 0.4L2.3 2L0.5 3.6" fill="none" stroke="#555" stroke-width="0.6"/></svg>
<div class="t" style="left:200.4px;top:404.26px">Lock Invite</div>
<div class="t" style="left:200.4px;top:419.65px">View Invite History</div>
<div class="t" style="left:200.4px;top:435.04px">Open Pedigree</div>
<div class="t" style="left:200.4px;top:450.43px">Open Datasheet</div>
<div class="t" style="left:200.4px;top:465.82px">Generate Letter</div>
<div class="abs" style="left:194.8px;top:472.5px;width:1px;height:7.5px;background:#b9d3ee"></div>
<svg class="abs" style="left:170px;top:151px" width="6.9" height="10.4" viewBox="0 0 8 12"><path d="M0.5 0.5V9.5L2.7 7.5L4.2 11L5.6 10.4L4.1 7H7z" fill="#fff" stroke="#2a2a35" stroke-width="0.8"/></svg>
<svg class="abs" style="left:185.4px;top:331px" width="10.4" height="13.2" viewBox="0 0 10.4 13.2"><path d="M3 1.2a0.9 0.9 0 0 1 1.9 0V5.2l1.1 0.1l1.2 0.2l1.3 0.3c0.9 0.2 1.3 0.8 1.3 1.7L9.6 9.7C9.4 11.5 8.2 12.7 6.5 12.7H5.2C4 12.7 3.2 12.1 2.5 11.1L0.6 8.4c-0.5-0.8 0.4-1.6 1.1-1L3 8.4z" fill="#fff" stroke="#3c3c46" stroke-width="0.65"/><path d="M4.9 5.2V7M6.3 5.5V7.1M7.7 5.8V7.3" stroke="#3c3c46" stroke-width="0.45" fill="none"/></svg>
</div></div></body></html>
